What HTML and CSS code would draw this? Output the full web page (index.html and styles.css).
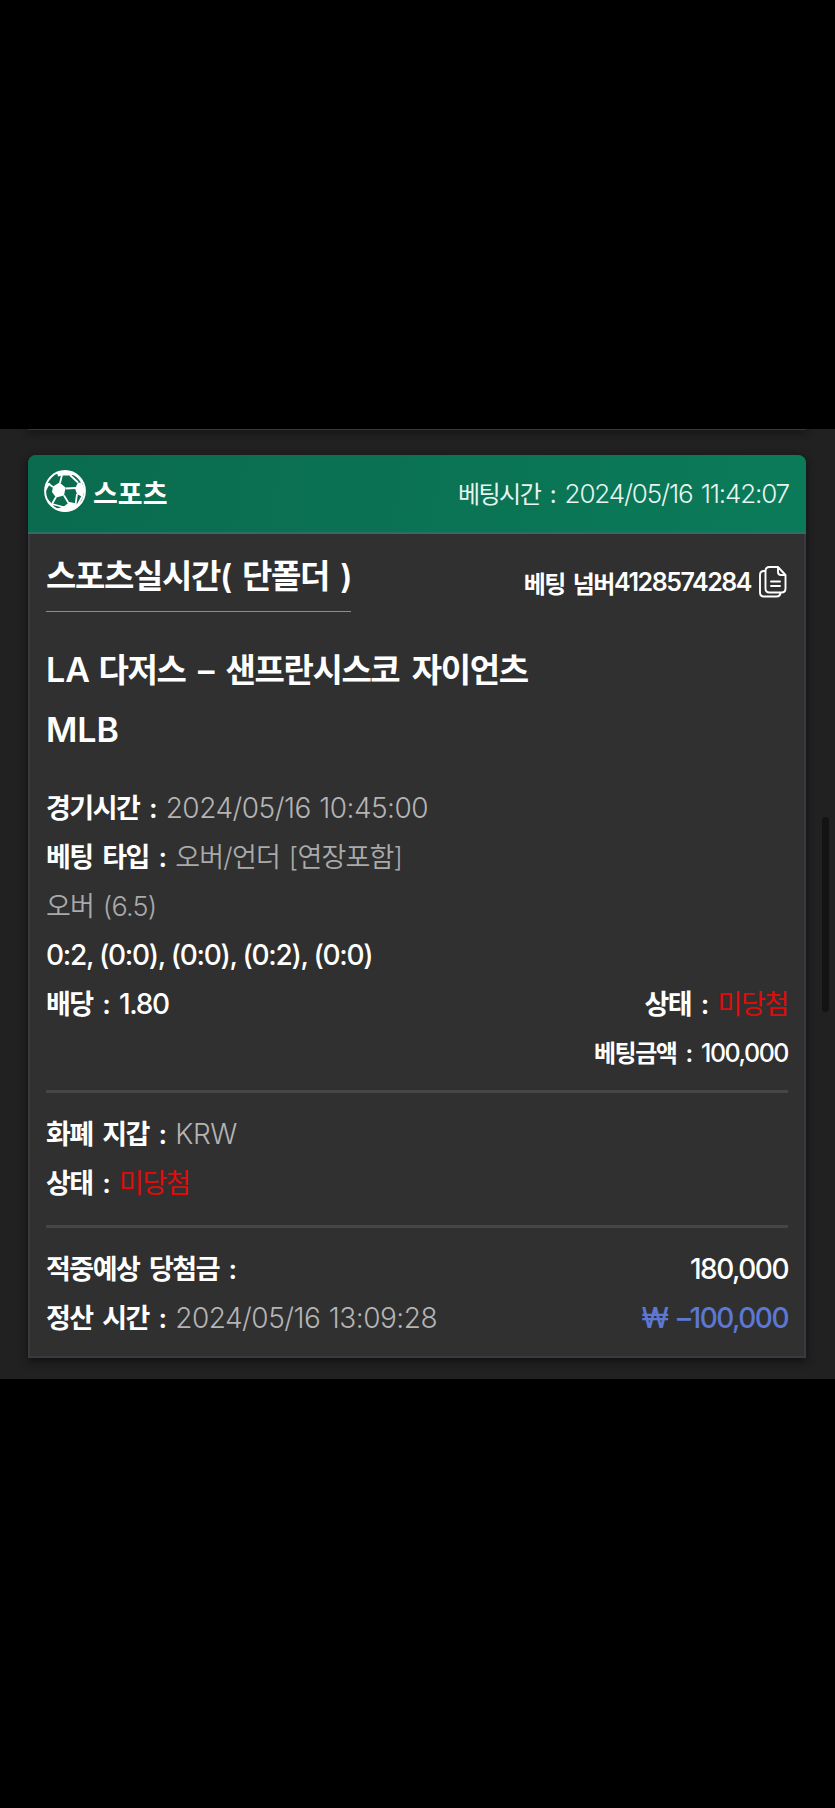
FILE: index.html
```html
<!DOCTYPE html>
<html lang="ko">
<head>
<meta charset="utf-8">
<title>베팅 내역</title>
<link rel="stylesheet" href="styles.css">
</head>
<body>
<main class="screen">
  <div class="prev-card"></div>
  <article class="card">
    <header class="card-head">
      <svg class="ball" viewBox="0 0 42 42">
        <circle cx="21" cy="21" r="19.9" fill="none" stroke="#fff" stroke-width="2"/>
        <g fill="#fff">
          <path d="M9 16.500 15.500 12.500 21.500 17.500 20 25.500 12 27.500 8 22Z"/>
          <path d="M31 18.500 34 12.500 38 13 41 20 38.500 27 33 24Z"/>
          <path d="M13 3C18 0 26 0 31 4.500L26 5.500H18L14 6.500Z"/>
          <path d="M20.500 36 25.500 32 32.500 33.500 33.500 37.500C27 42.500 17 42.500 12 39Z"/>
          <path d="M2.500 13.500 6.500 13 3.500 18 1.500 22Z"/>
          <path d="M3.500 29 8 34 10.500 37.500C6 35 4 32 3.500 29Z"/>
        </g>
        <g fill="none" stroke="#fff" stroke-width="1.800">
          <path d="M16 13 18 5M21.500 18.500 32 18M20 25.500 24.500 33M12 27 8 34M9 17 4 13.500M26 5 34 12.500M33 24 31.500 35M29 4Q35 7 38 13M8 34 21 37.500M39 25 33 36"/>
        </g>
      </svg>
      <span class="cat">스포츠</span>
      <span class="bet-time"><span class="time-label">베팅시간 : </span><span class="time-value">2024/05/16 11:42:07</span></span>
    </header>
    <div class="card-body">
      <div class="title-row">
        <h2 class="title">스포츠실시간( 단폴더 )</h2>
        <div class="bet-no"><span class="bet-label">베팅 넘버</span><span class="bet-id">4128574284</span>
          <svg class="copy" viewBox="0 0 28 32" fill="none" stroke="#fff" stroke-width="1.900" stroke-linejoin="round" stroke-linecap="round">
            <path d="M10.500 1H19L26.500 9V22.500Q26.500 26.500 22.500 26.500H10.500Q6.500 26.500 6.500 22.500V5Q6.500 1 10.500 1ZM19 1V6Q19 9 22 9H26.500M12 15.500H21M12 20H21M6.500 5H5Q1 5 1 9V26.500Q1 30.500 5 30.500H17.500Q21 30.500 21.500 27"/>
          </svg>
        </div>
      </div>
      <div class="match"><span class="latin">LA </span><span class="teams">다저스 – 샌프란시스코 자이언츠</span></div>
      <div class="match"><span class="latin">MLB</span></div>
      <section class="rows first">
        <div class="row"><span><b class="k">경기시간 : </b><span class="v">2024/05/16 10:45:00</span></span></div>
        <div class="row"><span><b class="k">베팅 타입 : </b><span class="vk">오버/언더 [연장포함]</span></span></div>
        <div class="row"><span class="vk">오버 (6.5)</span></div>
        <div class="row"><b class="n">0:2, (0:0), (0:0), (0:2), (0:0)</b></div>
        <div class="row"><span><b class="k">배당 : </b><b class="n">1.80</b></span><span><b class="k">상태 : </b><span class="lose">미당첨</span></span></div>
        <div class="row end"><span><b class="sk">베팅금액 : </b><b class="sn">100,000</b></span></div>
      </section>
      <section class="rows wallet">
        <div class="row"><span><b class="k">화폐 지갑 : </b><span class="v">KRW</span></span></div>
        <div class="row"><span><b class="k">상태 : </b><span class="lose">미당첨</span></span></div>
      </section>
      <section class="rows payout">
        <div class="row"><b class="k">적중예상 당첨금 :</b><b class="n sum">180,000</b></div>
        <div class="row"><span><b class="k">정산 시간 : </b><span class="v">2024/05/16 13:09:28</span></span><b class="n sum loss">₩ –100,000</b></div>
      </section>
    </div>
  </article>
  <div class="scrollbar"></div>
</main>
</body>
</html>
```
FILE: styles.css
```css
* { box-sizing: border-box; }
html, body { margin: 0; background: #000; }
body { padding-top: 429px; height: 1808px; color: #fff; font-family: Inter, "Noto Sans CJK KR", sans-serif; font-weight: 500; white-space: nowrap; }
span, b { white-space: pre; }

.screen { position: relative; height: 950px; padding: 0 29px 0 28px; background: #212122; overflow: hidden; }
.prev-card { height: 1px; background: #38383a; box-shadow: 0 2px 6px 1px #101012; }
.card { margin-top: 25px; height: 903px; border-radius: 8px 8px 0 0; box-shadow: 0 3px 8px #0f0f12; background: #303030; }

.card-head { height: 79px; padding: 0 17px 3px 16px; display: flex; align-items: center; border-radius: 8px 8px 0 0; background: linear-gradient(100deg, #0a6b4e, #0a7b59); border-bottom: 2px solid #2d6d66; }
.ball { width: 42px; height: 42px; margin-top: -2px; }
.cat { font-size: 27px; font-weight: 700; margin-left: 7px; }
.bet-time { margin-left: auto; display: flex; align-items: baseline; font-weight: 400; color: #e8f4f0; }
.time-label { font-size: 24px; letter-spacing: -1.5px; word-spacing: 4.2px; }
.time-value { font-size: 26px; font-weight: 350; letter-spacing: -1.15px; word-spacing: 2px; }

.card-body { height: 824px; padding: 0 16px; border: 2px solid #3a3a3e; border-top: 0; }
.title-row { height: 106px; display: flex; justify-content: space-between; align-items: flex-start; }
.title { margin: 8px 0 0; border-bottom: 1px solid #8c8c8c; font-size: 33px; font-weight: 600; line-height: 69px; letter-spacing: -1.38px; word-spacing: 4.3px; white-space: pre; }
.bet-no { display: flex; align-items: center; height: 36px; margin-top: 30px; font-weight: 600; }
.bet-label { font-size: 24px; letter-spacing: -1.4px; word-spacing: 3px; }
.bet-id { font-size: 25px; letter-spacing: -1.46px; }
.copy { width: 28px; height: 32px; margin: 0 1px 0 8px; }

.match { height: 60px; line-height: 60px; font-size: 33px; font-weight: 600; }
.latin { font-size: 34px; font-weight: 600; letter-spacing: 0; }
.teams { letter-spacing: -1.4px; word-spacing: 5.6px; }

.rows { padding: 17px 0 0; border-top: 3px solid #464646; }
.rows.first { border: 0; margin-top: 24px; padding: 0; }
.wallet { margin-top: 12px; }
.payout { margin-top: 17px; }
.row { height: 49px; display: flex; justify-content: space-between; align-items: center; line-height: 49px; font-size: 28px; }
.row > span { display: flex; align-items: baseline; }
.row.end { justify-content: flex-end; }
.k { font-size: 27px; font-weight: 600; letter-spacing: -1.5px; word-spacing: 4.3px; }
.n { font-weight: 500; letter-spacing: -1.31px; }
.sum { letter-spacing: -1.5px; word-spacing: 3.5px; }
.v { font-weight: 300; color: #b4b4b4; letter-spacing: -.5px; word-spacing: 1px; }
.vk { font-size: 27px; font-weight: 350; color: #aaa; letter-spacing: -.8px; word-spacing: 2px; }
.lose { font-size: 27px; font-weight: 400; color: #e00c0c; letter-spacing: -1.3px; }
.sk { font-size: 24px; font-weight: 600; letter-spacing: -1.5px; word-spacing: 4.7px; }
.sn { font-size: 25px; font-weight: 500; letter-spacing: -1.47px; }
.loss { color: #5c78d2; }

.scrollbar { position: absolute; right: 6px; top: 388px; width: 7px; height: 195px; border-radius: 4px; background: #131313; }
```
